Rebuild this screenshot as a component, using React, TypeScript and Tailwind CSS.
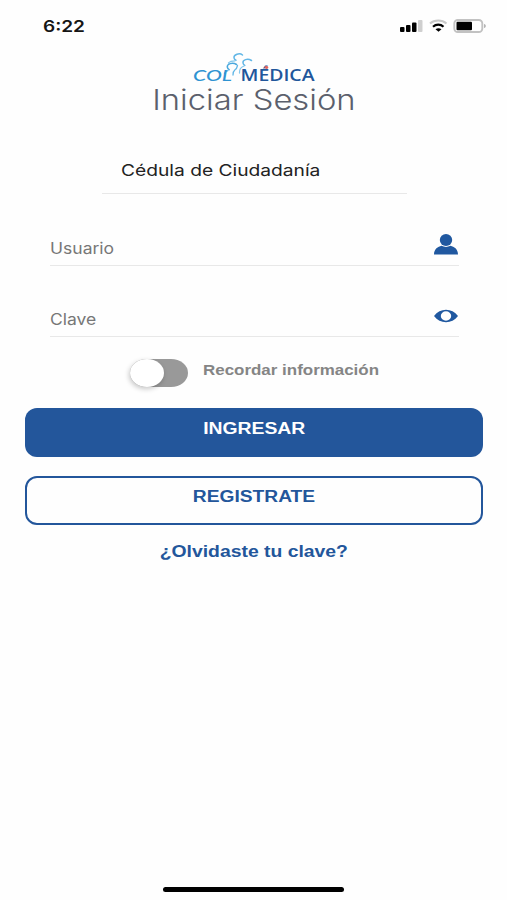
const StatusBar = () => {
  return (
    <header className="flex h-[52px] items-center justify-between pl-[43px] pr-[19px]">
      <span className="origin-left scale-x-[1.19] font-['Inter',sans-serif] text-[16px] font-semibold leading-none text-[#151515]">
        6:22
      </span>
      <svg width="88" height="16" viewBox="0 0 88 16" className="block">
        {/* SIGNAL */}
        <rect x="0" y="9" width="4.500" height="5" rx="1" fill="#000" />
        <rect x="6" y="7" width="4.500" height="7" rx="1" fill="#000" />
        <rect x="12" y="4.500" width="4.500" height="9.500" rx="1" fill="#000" />
        <rect x="18" y="2" width="4.500" height="12" rx="1" fill="#cfcfcf" />
        {/* WIFI */}
        <path d="M30 5.500C34.500 1.500 42 1.500 46.500 5.500" fill="none" stroke="#c9c9c9" strokeWidth="2" />
        <path d="M33 8.700C36 6 40.500 6 43.500 8.700" fill="none" stroke="#000" strokeWidth="2.200" />
        <path d="M35.500 11.300C37.500 10 39.500 10 41.500 11.300L38.500 13.800Z" fill="#000" />
        {/* BATTERY */}
        <rect x="54.300" y="2" width="28" height="12" rx="3.500" fill="#fff" stroke="#c2c2c2" strokeWidth="1.900" />
        <rect x="56.500" y="3.800" width="15.500" height="8.400" rx="1" fill="#000" />
        <path d="M84 6C86.500 6.700 86.500 9.300 84 10Z" fill="#b5b5b5" />
      </svg>
    </header>
  );
};

const Logo = () => {
  return (
    <svg width="126" height="34" viewBox="0 0 126 34" className="block" role="img" aria-label="Colmédica">
      <g fill="none" strokeLinecap="round">
        {/* BACK FIGURE */}
        <path d="M51.500 3C48.500 0.500 42.500 2.500 43 5.800C43.200 7 44 7.800 45 8.200" stroke="#63b7e6" strokeWidth="1.500" />
        <path d="M44 8.800C41 8.800 38.500 9.700 37.500 11" stroke="#86c8ec" strokeWidth="1.300" />
        {/* RIGHT FIGURE */}
        <path d="M60.500 8.500C56.500 6 51.500 7.800 52 11C52.200 12.200 53 13 53.800 13.400" stroke="#63b7e6" strokeWidth="1.500" />
        <path d="M53 14C50 15 48.300 18 48.500 21" stroke="#86c8ec" strokeWidth="1.300" />
        {/* LEFT FIGURE */}
        <path d="M45.500 12.500C41.500 10 35.800 11.800 36.300 15.200C36.500 16.500 37.300 17.200 38.200 17.600" stroke="#4aa8dd" strokeWidth="1.500" />
        <path d="M37 18.500C35 19 34 20 33.500 21.500M46.500 13.500C46 16 45.500 17 44 17.800C42.500 19 42 21 42 23" stroke="#63b7e6" strokeWidth="1.300" />
      </g>
      <text x="2" y="29" textLength="39" lengthAdjust="spacingAndGlyphs" className="font-['Lato',sans-serif] text-[16px] font-medium italic" fill="#2e93d2">
        COL
      </text>
      <text x="49.500" y="29" textLength="74" lengthAdjust="spacingAndGlyphs" className="font-['Open_Sans',sans-serif] text-[16px] font-semibold" fill="#21569b">
        MÉDICA
      </text>
      <ellipse cx="75.500" cy="15.500" rx="1.800" ry="1.400" fill="#e0645f" />
    </svg>
  );
};

const UserIcon = () => {
  return (
    <svg width="24" height="21" viewBox="0 0 24 21" fill="#2058a0">
      <ellipse cx="12" cy="6" rx="6.200" ry="5.900" />
      <path d="M0 20.500C0 15 4 12.600 7.500 11.800Q12 14 16.500 11.800C20 12.600 24 15 24 20.500Z" />
    </svg>
  );
};

const EyeIcon = () => {
  return (
    <svg width="24" height="14" viewBox="0 0 24 14" fill="#2058a0">
      <path fillRule="evenodd" d="M0 7C6-1.300 18-1.300 24 7C18 15.300 6 15.300 0 7ZM12 2.300A5.200 4.700 0 1 0 12 11.700A5.200 4.700 0 1 0 12 2.300Z" />
    </svg>
  );
};

const App = () => {
  return (
    <div className="flex h-[900px] w-[507px] flex-col overflow-hidden bg-[#fefefe] font-['Liberation_Sans',sans-serif]">
      <StatusBar />

      {/* BRAND */}
      <div className="flex flex-col items-center">
        <Logo />
        <h1 className="h-7 origin-center scale-x-[1.17] whitespace-nowrap font-['Inter',sans-serif] text-[28px] font-light leading-7 text-[#5b606c]">
          Iniciar Sesión
        </h1>
      </div>

      {/* DOCUMENT TYPE */}
      <div className="ml-[102px] mt-[38px] h-[42px] w-[305px] border-b border-[#e8e8e8] pl-[19px] pt-[7px]">
        <span className="inline-block origin-left scale-x-[1.2] whitespace-nowrap font-['Inter',sans-serif] text-[16px] leading-5 text-[#222]">
          Cédula de Ciudadanía
        </span>
      </div>

      {/* FIELDS */}
      <div className="ml-[50px] mr-[48px] mt-[30px] flex h-[42px] justify-between border-b border-[#e8e8e8] pr-px pt-[10px]">
        <span className="h-5 origin-left scale-x-[1.13] pt-[5px] font-['Inter',sans-serif] text-[15.500px] leading-5 text-[#777]">
          Usuario
        </span>
        <UserIcon />
      </div>
      <div className="ml-[50px] mr-[48px] mt-[29px] flex h-[42px] justify-between border-b border-[#e8e8e8] pr-px pt-[14px]">
        <span className="h-5 origin-left scale-x-[1.13] pt-px font-['Inter',sans-serif] text-[15.500px] leading-5 text-[#777]">
          Clave
        </span>
        <EyeIcon />
      </div>

      {/* REMEMBER */}
      <div className="ml-[130px] mt-[22px] flex h-7">
        <div className="h-7 w-[58px] rounded-[17px/14px] bg-[#999]">
          <div className="h-7 w-[34px] rounded-[50%] bg-white shadow-[-1px_2px_5px_rgba(0,0,0,0.22)]" />
        </div>
        <span className="ml-[15px] mt-px origin-left scale-x-[1.21] whitespace-nowrap text-[14px] font-bold leading-5 text-[#858585]">
          Recordar información
        </span>
      </div>

      {/* ACTIONS */}
      <button className="ml-[25px] mr-[24px] mt-[21px] h-[49px] rounded-[12px] bg-[#23569b] pb-[8px] text-[16px] font-bold text-white">
        <span className="inline-block scale-x-[1.21]">INGRESAR</span>
      </button>
      <button className="ml-[25px] mr-[24px] mt-[19px] h-[49px] rounded-[12px] border-2 border-[#23569b] pb-[8px] text-[16px] font-bold text-[#23569b]">
        <span className="inline-block scale-x-[1.2]">REGISTRATE</span>
      </button>
      <a className="mt-[17px] self-center whitespace-nowrap text-[16px] font-bold leading-5 text-[#23569b]">
        <span className="inline-block scale-x-[1.21]">¿Olvidaste tu clave?</span>
      </a>

      {/* HOME INDICATOR */}
      <div className="mb-[8px] mt-auto h-[5px] w-[181px] self-center rounded-full bg-black" />
    </div>
  );
};

export default App;
